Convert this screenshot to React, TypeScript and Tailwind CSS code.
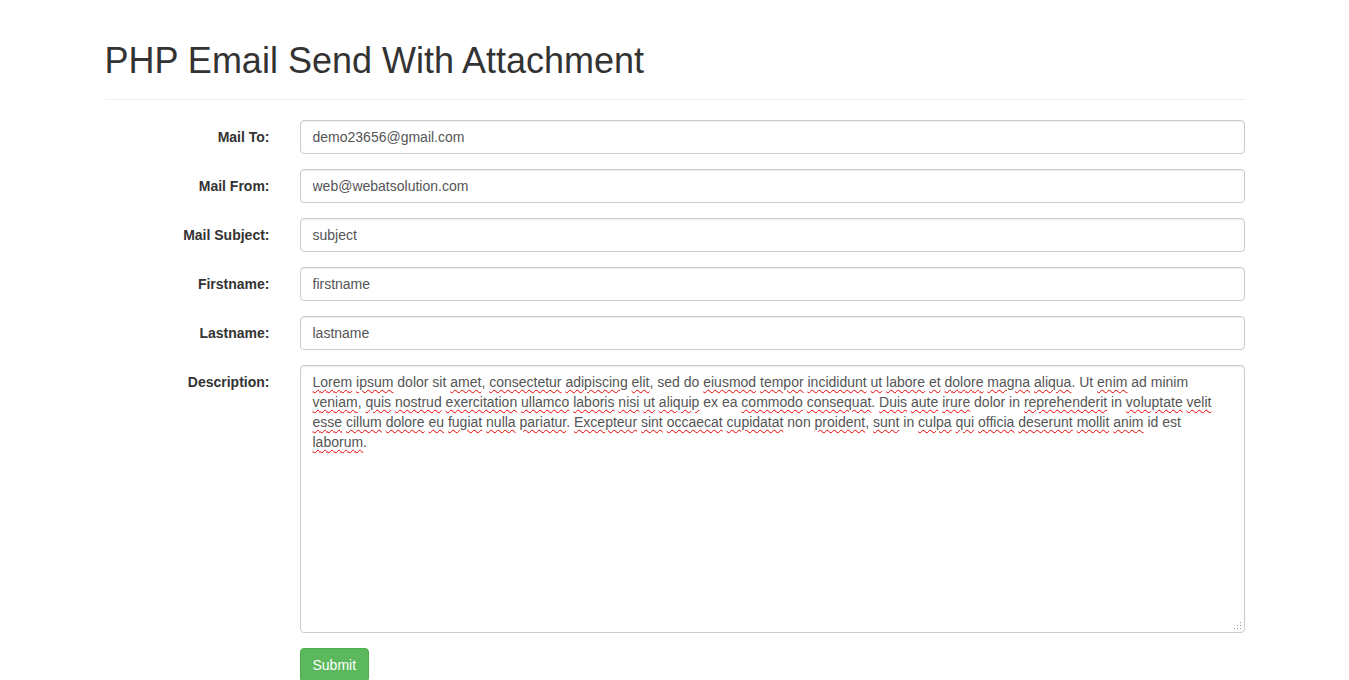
const fields = [
  { label: "Mail To:", value: "demo23656@gmail.com" },
  { label: "Mail From:", value: "web@webatsolution.com" },
  { label: "Mail Subject:", value: "subject" },
  { label: "Firstname:", value: "firstname" },
  { label: "Lastname:", value: "lastname" },
]

// words the browser's spell checker marked (index 1 of each pair = flagged)
const description: [string, boolean][] = [
  ["Lorem", true], ["ipsum", true], ["dolor sit", false], ["amet", true], [",", false],
  ["consectetur", true], ["adipiscing", true], ["elit", true], [", sed do", false],
  ["eiusmod", true], ["tempor", true], ["incididunt", true], ["ut", true], ["labore", true],
  ["et", true], ["dolore", true], ["magna", true], ["aliqua", true], [". Ut", false],
  ["enim", true], ["ad minim", false], ["veniam", true], [",", false], ["quis", true],
  ["nostrud", true], ["exercitation", true], ["ullamco", true], ["laboris", true],
  ["nisi", true], ["ut", true], ["aliquip", true], ["ex ea", false], ["commodo", true],
  ["consequat", true], [".", false], ["Duis", true], ["aute", true], ["irure", true],
  ["dolor in", false], ["reprehenderit", true], ["in", false], ["voluptate", true],
  ["velit", true], ["esse", true], ["cillum", true], ["dolore", true], ["eu", true],
  ["fugiat", true], ["nulla", true], ["pariatur", true], [".", false], ["Excepteur", true],
  ["sint", true], ["occaecat", true], ["cupidatat", true], ["non", false], ["proident", true],
  [",", false], ["sunt", true], ["in", false], ["culpa", true], ["qui", true], ["officia", true],
  ["deserunt", true], ["mollit", true], ["anim", true], ["id est", false], ["laborum", true],
  [".", false],
]

export default function App() {
  return (
    <div className="min-h-screen bg-white font-['Liberation_Sans',Arial,sans-serif] text-[14px] leading-[20px] text-[#333]">
      <div className="mx-auto w-[1170px] px-[15px] pt-[41px]">
        <h1 className="text-[36px] font-medium leading-[1.1] text-[#333]">
          PHP Email Send With Attachment
        </h1>
        <div className="mt-[18px] mb-[20px] border-t border-[#eee]" />

        <form>
          {fields.map((f) => (
            <div key={f.label} className="mb-[15px] flex gap-[30px]">
              <label className="w-[165px] shrink-0 pt-[7px] text-right font-bold">
                {f.label}
              </label>
              <input
                type="text"
                defaultValue={f.value}
                className="h-[34px] flex-1 rounded-[4px] border border-[#ccc] px-[12px] py-[6px] text-[14px] text-[#555] shadow-[inset_0_1px_1px_rgba(0,0,0,0.075)] outline-none"
              />
            </div>
          ))}

          <div className="mb-[15px] flex gap-[30px]">
            <label className="w-[165px] shrink-0 pt-[7px] text-right font-bold">
              Description:
            </label>
            <div className="relative h-[268px] flex-1 rounded-[4px] border border-[#ccc] px-[12px] py-[6px] text-[#555] shadow-[inset_0_1px_1px_rgba(0,0,0,0.075)]">
              <p>
                {description.map(([w, flagged], i) => {
                  const sep = i === 0 || /^[.,]/.test(w) ? "" : " "
                  return (
                    <span key={i}>
                      {sep}
                      {flagged ? (
                        <span className="underline decoration-[#e00] decoration-wavy decoration-1 underline-offset-[2px]">
                          {w}
                        </span>
                      ) : (
                        w
                      )}
                    </span>
                  )
                })}
              </p>
              <svg
                className="absolute right-[2px] bottom-[2px]"
                width="8"
                height="8"
                viewBox="0 0 8 8"
              >
                <rect x="6" y="0" width="1" height="1" fill="#999" />
                <rect x="3" y="3" width="1" height="1" fill="#999" />
                <rect x="6" y="3" width="1" height="1" fill="#999" />
                <rect x="0" y="6" width="1" height="1" fill="#999" />
                <rect x="3" y="6" width="1" height="1" fill="#999" />
                <rect x="6" y="6" width="1" height="1" fill="#999" />
              </svg>
            </div>
          </div>

          <div className="flex gap-[30px]">
            <div className="w-[165px] shrink-0" />
            <button
              type="submit"
              className="h-[34px] rounded-[4px] border border-[#4cae4c] bg-[#5cb85c] px-[12px] text-[14px] text-white"
            >
              Submit
            </button>
          </div>
        </form>
      </div>
    </div>
  )
}
